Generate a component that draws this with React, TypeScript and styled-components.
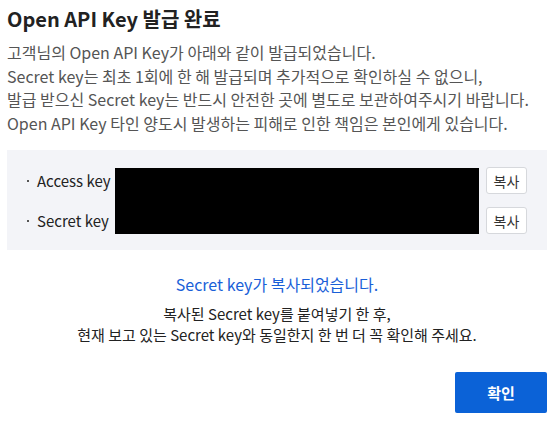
import styled, { createGlobalStyle } from "styled-components";

const GlobalStyle = createGlobalStyle`
  html, body {
    margin: 0;
    padding: 0;
    background: #fff;
  }
  body {
    font-family: "Noto Sans CJK KR", "Noto Sans", sans-serif;
  }
`;

const Dialog = styled.div`
  width: 560px;
  height: 424px;
  box-sizing: border-box;
  padding: 6px 13px 0 7px;
  display: flex;
  flex-direction: column;
`;

const Title = styled.h2`
  margin: 0;
  font-size: 20px;
  line-height: 26px;
  font-weight: 700;
  color: #222;
`;

const Description = styled.p`
  margin: 9px 0 0;
  font-size: 16px;
  line-height: 23.5px;
  color: #555;
`;

const KeyPanel = styled.div`
  margin-top: 15px;
  height: 100px;
  box-sizing: border-box;
  background: #f3f4f8;
  padding: 17px 20px 16px;
  display: grid;
  grid-template-columns: 88px 364px 48px;
  grid-template-rows: 27px 27px;
  row-gap: 13px;
  align-items: center;
`;

const KeyLabel = styled.div<{ $row: number }>`
  grid-column: 1;
  grid-row: ${(p) => p.$row};
  font-size: 15px;
  color: #222;
  display: flex;
  align-items: center;

  &::before {
    content: "";
    width: 2px;
    height: 2px;
    margin: 1px 8px 0 0;
    background: #555;
  }
`;

const Redaction = styled.div`
  grid-column: 2;
  grid-row: 1 / span 2;
  align-self: stretch;
  margin-top: 1px;
  background: #000;
`;

const CopyButton = styled.button<{ $row: number }>`
  grid-column: 3;
  grid-row: ${(p) => p.$row};
  justify-self: end;
  width: 41px;
  height: 27px;
  padding: 0;
  background: #fff;
  border: 1px solid #d6d8dc;
  border-radius: 3px;
  font-family: inherit;
  font-size: 14px;
  color: #333;
  cursor: pointer;
`;

const Notice = styled.div`
  margin-top: 23px;
  text-align: center;
  font-size: 16px;
  line-height: 22px;
  color: #1a5fd8;
`;

const Guide = styled.p`
  margin: 7.5px 0 0;
  text-align: center;
  font-size: 15px;
  line-height: 21px;
  color: #222;
`;

const Footer = styled.div`
  margin-top: 27.5px;
  display: flex;
  justify-content: flex-end;
`;

const ConfirmButton = styled.button`
  width: 92px;
  height: 41px;
  border: none;
  border-radius: 2px;
  background: #0b62d7;
  color: #fff;
  font-family: inherit;
  font-size: 15px;
  font-weight: 700;
  cursor: pointer;
`;

export default function App() {
  return (
    <>
      <GlobalStyle />
      <Dialog>
        <Title>Open API Key 발급 완료</Title>
        <Description>
          고객님의 Open API Key가 아래와 같이 발급되었습니다.
          <br />
          Secret key는 최초 1회에 한 해 발급되며 추가적으로 확인하실 수 없으니,
          <br />
          발급 받으신 Secret key는 반드시 안전한 곳에 별도로 보관하여주시기 바랍니다.
          <br />
          Open API Key 타인 양도시 발생하는 피해로 인한 책임은 본인에게 있습니다.
        </Description>
        <KeyPanel>
          <KeyLabel $row={1}>Access key</KeyLabel>
          <Redaction />
          <CopyButton $row={1}>복사</CopyButton>
          <KeyLabel $row={2}>Secret key</KeyLabel>
          <CopyButton $row={2}>복사</CopyButton>
        </KeyPanel>
        <Notice>Secret key가 복사되었습니다.</Notice>
        <Guide>
          복사된 Secret key를 붙여넣기 한 후,
          <br />
          현재 보고 있는 Secret key와 동일한지 한 번 더 꼭 확인해 주세요.
        </Guide>
        <Footer>
          <ConfirmButton>확인</ConfirmButton>
        </Footer>
      </Dialog>
    </>
  );
}
